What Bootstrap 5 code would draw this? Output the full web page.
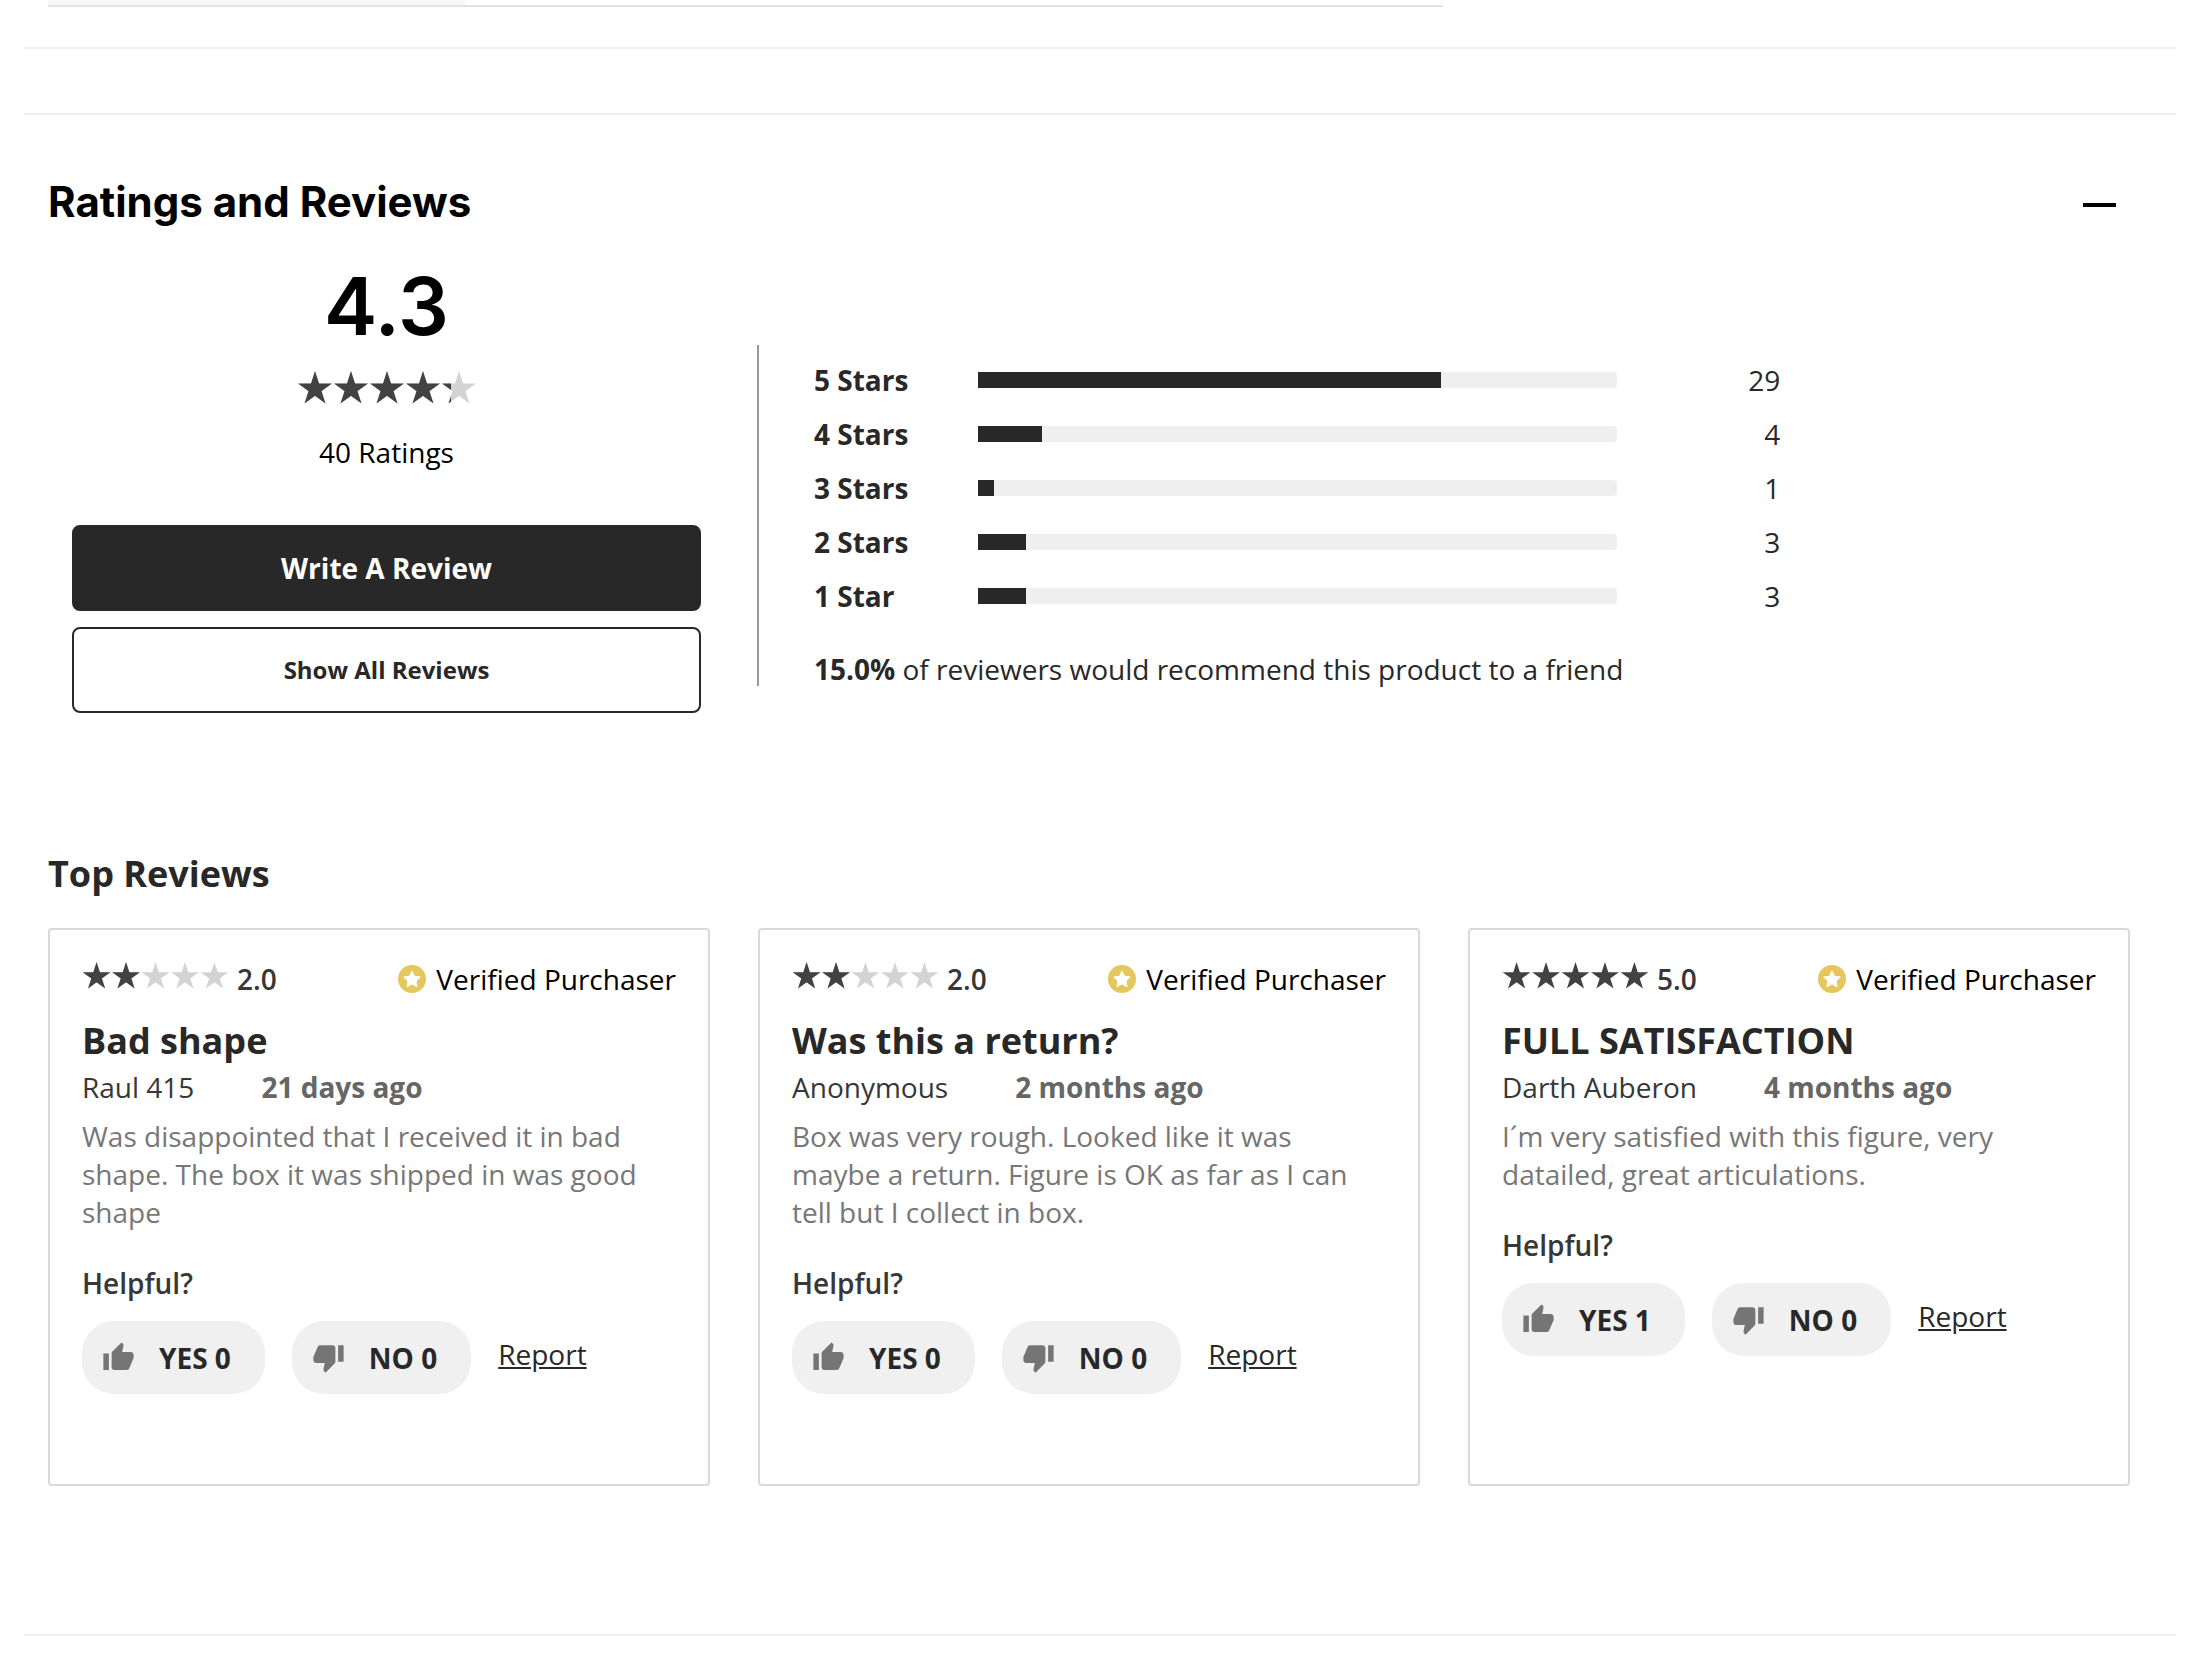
<!DOCTYPE html>
<html lang="en">
<head>
<meta charset="utf-8">
<meta name="viewport" content="width=device-width, initial-scale=1">
<title>Ratings and Reviews</title>
<link href="https://cdn.jsdelivr.net/npm/bootstrap@5.3.0/dist/css/bootstrap.min.css" rel="stylesheet">
<style>
  body { font-family: "Open Sans", "Noto Sans", sans-serif; font-size: 28px; line-height: 38px; color: #282828; background: #fff; }
  .page { padding: 0 24px; }
  .rule { border: 0; border-top: 2px solid #eee; opacity: 1; margin: 0; }
  .rule-first { margin-top: 40px; }
  .rule-second { margin-top: 64px; }
  .rule-last { margin-top: 148px; }
  .tab-strip { width: 67%; height: 7px; border-bottom: 2px solid #e3e3e3; }
  .tab-panel { width: 30%; height: 5px; background: #f9f9f9; }
  .inset { padding: 0 46px 0 24px; }
  .display-font { font-family: Inter, sans-serif; color: #000; }
  .section-head { padding-top: 57px; }
  .section-title { font-size: 42px; line-height: 60px; font-weight: 700; }
  .collapse-btn { margin-right: 14px; }
  .score { font-size: 80px; line-height: 96px; font-weight: 600; }
  .sub-title { font-size: 36px; line-height: 49px; font-weight: 700; }
  .summary-row { margin-top: 26px; margin-right: -45px; }
  .score-col { padding: 0 56px 0 24px; }
  .star-lg { width: 178px; height: 33px; margin-top: 17px; }
  .star-sm { width: 147px; height: 27px; }
  .total { margin: 29px 0 54px; color: #000; }
  .btn-review { height: 86px; border: 2px solid #282828; border-radius: 8px; font-weight: 700; }
  .btn-review-dark, .btn-review-dark:hover { background: #282828; color: #fff; font-size: 28px; }
  .btn-review-light, .btn-review-light:hover { background: #fff; color: #282828; font-size: 24px; }
  .histogram { margin-top: 87px; padding: 8px 0 0 55px; border-left: 2px solid #999; }
  .bar-row { display: grid; grid-template-columns: 164px 1fr 163px; align-items: center; height: 54px; width: 71%; }
  .bar-row .progress { height: 16px; border-radius: 0 4px 4px 0; background: #efefef; }
  .bar-row .progress-bar { background: #282828; }
  .recommend { line-height: 34px; margin: 29px 0 0; }
  .top-title { margin: 136px 0 30px; }
  .review { height: 100%; border: 2px solid #d9d9d9; border-radius: 4px; padding: 30px 32px 90px; }
  .review-title { margin: 18px 0 3px; }
  .value { font-weight: 600; color: #373737; }
  .verified { color: #000; gap: 10px; }
  .byline { gap: 67px; }
  .author { color: #373737; }
  .when { color: #666; font-weight: 700; }
  .comment { color: #777; margin: 11px 0 33px; }
  .votes { margin-top: 19px; gap: 27px; }
  .vote { background: #f0f0f0; border: 0; border-radius: 32px; height: 73px; padding: 0 34px 0 20px; gap: 24px; font-size: 28px; font-weight: 700; color: #282828; }
  .report { color: #282828; padding-bottom: 8px; }
</style>
</head>
<body>
<svg width="0" height="0" class="position-absolute" aria-hidden="true">
  <defs>
    <path id="star" d="M17 0L27.500 32.500L0 12.400H34L6.500 32.500Z"/>
    <g id="stars">
      <use href="#star"/><use href="#star" x="36"/><use href="#star" x="72"/><use href="#star" x="108"/><use href="#star" x="144"/>
    </g>
    <clipPath id="clip43"><rect width="153" height="33"/></clipPath>
    <clipPath id="clip20"><rect width="71" height="33"/></clipPath>
    <symbol id="seal" viewBox="0 0 28 28">
      <circle cx="14" cy="14" r="14" fill="#e5c75d"/>
      <path d="M14 6l2.500 5.300 5.800.7-4.300 4 1.100 5.800-5.100-2.900-5.100 2.900L10 16l-4.300-4 5.800-.7z" fill="#fff" stroke="#fff" stroke-linejoin="round"/>
    </symbol>
    <symbol id="up" viewBox="0 0 24 24">
      <path fill="#757575" d="M1 21h4V9H1v12zm22-11c0-1.100-.9-2-2-2h-6.310l.95-4.570.03-.32c0-.41-.17-.79-.44-1.060L14.170 1 7.590 7.590C7.220 7.950 7 8.450 7 9v10c0 1.100.9 2 2 2h9c.83 0 1.540-.5 1.840-1.220l3.020-7.050c.09-.23.14-.47.14-.73v-2z"/>
    </symbol>
    <symbol id="down" viewBox="0 0 24 24">
      <path fill="#757575" d="M15 3H6c-.83 0-1.540.5-1.840 1.220l-3.020 7.050c-.09.23-.14.47-.14.73v2c0 1.100.9 2 2 2h6.310l-.95 4.570-.03.32c0 .41.17.79.44 1.060L9.830 23l6.590-6.590c.36-.36.58-.86.58-1.410V5c0-1.100-.9-2-2-2zm4 0v12h4V3h-4z"/>
    </symbol>
  </defs>
</svg>

<main class="page">
  <div class="inset">
    <div class="tab-strip"><div class="tab-panel"></div></div>
  </div>
  <hr class="rule rule-first">
  <hr class="rule rule-second">

  <section class="inset">
    <div class="section-head d-flex justify-content-between align-items-center">
      <h2 class="section-title display-font m-0">Ratings and Reviews</h2>
      <button type="button" class="btn collapse-btn border-0 p-0 d-flex" aria-label="Collapse section">
        <svg width="33" height="60" viewBox="0 0 33 60"><path d="M0 33H33" stroke="#000" stroke-width="4"/></svg>
      </button>
    </div>

    <div class="row g-0 summary-row align-items-start">
      <div class="col-4 score-col d-flex flex-column align-items-center">
        <div class="score display-font">4.3</div>
        <svg class="star-lg" viewBox="0 0 178 33" role="img" aria-label="4.3 out of 5 stars">
          <use href="#stars" fill="#d3d3d3"/><use href="#stars" fill="#424242" clip-path="url(#clip43)"/>
        </svg>
        <div class="total">40 Ratings</div>
        <button type="button" class="btn btn-review btn-review-dark w-100">Write A Review</button>
        <button type="button" class="btn btn-review btn-review-light w-100 mt-3">Show All Reviews</button>
      </div>
      <div class="col-8 histogram">
        <div class="bar-row"><strong>5 Stars</strong><div class="progress"><div class="progress-bar" style="width:72.5%"></div></div><span class="text-end">29</span></div>
        <div class="bar-row"><strong>4 Stars</strong><div class="progress"><div class="progress-bar" style="width:10%"></div></div><span class="text-end">4</span></div>
        <div class="bar-row"><strong>3 Stars</strong><div class="progress"><div class="progress-bar" style="width:2.5%"></div></div><span class="text-end">1</span></div>
        <div class="bar-row"><strong>2 Stars</strong><div class="progress"><div class="progress-bar" style="width:7.5%"></div></div><span class="text-end">3</span></div>
        <div class="bar-row"><strong>1 Star</strong><div class="progress"><div class="progress-bar" style="width:7.5%"></div></div><span class="text-end">3</span></div>
        <p class="recommend"><strong>15.0%</strong> of reviewers would recommend this product to a friend</p>
      </div>
    </div>

    <h3 class="sub-title top-title">Top Reviews</h3>
    <div class="row gx-5">
      <div class="col-4">
        <article class="review">
          <div class="d-flex align-items-center justify-content-between">
            <div class="d-flex align-items-center">
              <svg class="star-sm mb-2" viewBox="0 0 178 33" role="img" aria-label="2 out of 5 stars"><use href="#stars" fill="#d3d3d3"/><use href="#stars" fill="#424242" clip-path="url(#clip20)"/></svg>
              <span class="value ms-2">2.0</span>
            </div>
            <div class="verified d-flex align-items-center"><svg width="28" height="28"><use href="#seal"/></svg>Verified Purchaser</div>
          </div>
          <h4 class="sub-title review-title">Bad shape</h4>
          <div class="byline d-flex"><span class="author">Raul 415</span><span class="when">21 days ago</span></div>
          <p class="comment">Was disappointed that I received it in bad shape. The box it was shipped in was good shape</p>
          <div class="value">Helpful?</div>
          <div class="votes d-flex align-items-center">
            <button type="button" class="vote d-flex align-items-center"><svg width="33" height="33"><use href="#up"/></svg>YES 0</button>
            <button type="button" class="vote d-flex align-items-center"><svg width="33" height="33"><use href="#down"/></svg>NO 0</button>
            <a href="#" class="report">Report</a>
          </div>
        </article>
      </div>
      <div class="col-4">
        <article class="review">
          <div class="d-flex align-items-center justify-content-between">
            <div class="d-flex align-items-center">
              <svg class="star-sm mb-2" viewBox="0 0 178 33" role="img" aria-label="2 out of 5 stars"><use href="#stars" fill="#d3d3d3"/><use href="#stars" fill="#424242" clip-path="url(#clip20)"/></svg>
              <span class="value ms-2">2.0</span>
            </div>
            <div class="verified d-flex align-items-center"><svg width="28" height="28"><use href="#seal"/></svg>Verified Purchaser</div>
          </div>
          <h4 class="sub-title review-title">Was this a return?</h4>
          <div class="byline d-flex"><span class="author">Anonymous</span><span class="when">2 months ago</span></div>
          <p class="comment">Box was very rough. Looked like it was maybe a return. Figure is OK as far as I can tell but I collect in box.</p>
          <div class="value">Helpful?</div>
          <div class="votes d-flex align-items-center">
            <button type="button" class="vote d-flex align-items-center"><svg width="33" height="33"><use href="#up"/></svg>YES 0</button>
            <button type="button" class="vote d-flex align-items-center"><svg width="33" height="33"><use href="#down"/></svg>NO 0</button>
            <a href="#" class="report">Report</a>
          </div>
        </article>
      </div>
      <div class="col-4">
        <article class="review">
          <div class="d-flex align-items-center justify-content-between">
            <div class="d-flex align-items-center">
              <svg class="star-sm mb-2" viewBox="0 0 178 33" role="img" aria-label="5 out of 5 stars"><use href="#stars" fill="#424242"/></svg>
              <span class="value ms-2">5.0</span>
            </div>
            <div class="verified d-flex align-items-center"><svg width="28" height="28"><use href="#seal"/></svg>Verified Purchaser</div>
          </div>
          <h4 class="sub-title review-title">FULL SATISFACTION</h4>
          <div class="byline d-flex"><span class="author">Darth Auberon</span><span class="when">4 months ago</span></div>
          <p class="comment">I´m very satisfied with this figure, very datailed, great articulations.</p>
          <div class="value">Helpful?</div>
          <div class="votes d-flex align-items-center">
            <button type="button" class="vote d-flex align-items-center"><svg width="33" height="33"><use href="#up"/></svg>YES 1</button>
            <button type="button" class="vote d-flex align-items-center"><svg width="33" height="33"><use href="#down"/></svg>NO 0</button>
            <a href="#" class="report">Report</a>
          </div>
        </article>
      </div>
    </div>
  </section>
  <hr class="rule rule-last">
</main>
<script src="https://cdn.jsdelivr.net/npm/bootstrap@5.3.0/dist/js/bootstrap.bundle.min.js"></script>
</body>
</html>
